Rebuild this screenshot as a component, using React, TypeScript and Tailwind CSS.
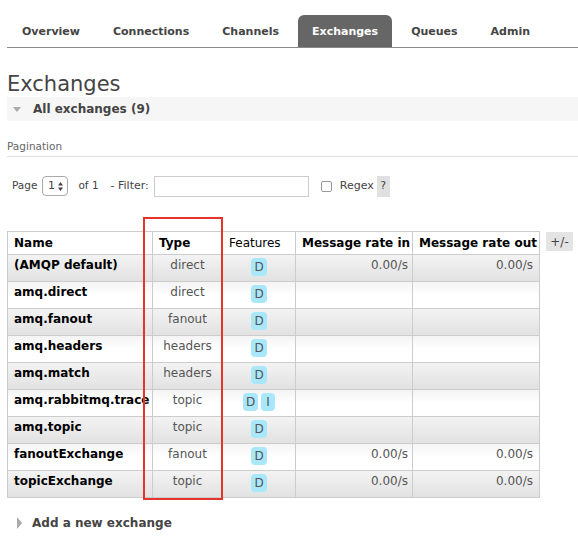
import React from "react";

const TABS = ["Overview", "Connections", "Channels", "Exchanges", "Queues", "Admin"];

const ROWS = [
  { name: "(AMQP default)", type: "direct", features: ["D"], rin: "0.00/s", rout: "0.00/s" },
  { name: "amq.direct", type: "direct", features: ["D"], rin: "", rout: "" },
  { name: "amq.fanout", type: "fanout", features: ["D"], rin: "", rout: "" },
  { name: "amq.headers", type: "headers", features: ["D"], rin: "", rout: "" },
  { name: "amq.match", type: "headers", features: ["D"], rin: "", rout: "" },
  { name: "amq.rabbitmq.trace", type: "topic", features: ["D", "I"], rin: "", rout: "" },
  { name: "amq.topic", type: "topic", features: ["D"], rin: "", rout: "" },
  { name: "fanoutExchange", type: "fanout", features: ["D"], rin: "0.00/s", rout: "0.00/s" },
  { name: "topicExchange", type: "topic", features: ["D"], rin: "0.00/s", rout: "0.00/s" },
];

function Badge({ label }: { label: string }) {
  return (
    <span className="inline-flex h-[18px] min-w-[14px] items-center justify-center rounded-[4px] bg-[#a9e7fb] px-[3px] text-[12px] leading-none text-[#555]">
      {label}
    </span>
  );
}

export default function App() {
  return (
    <div className="relative min-h-[545px] w-[578px] overflow-hidden bg-white pt-[15px] pl-[7px] font-['DejaVu_Sans',Verdana,sans-serif] text-[#444]">
      {/* Tabs */}
      <nav className="flex h-[33px] border-b border-[#888] pl-px">
        {TABS.map((t) => (
          <div
            key={t}
            className={
              t === "Exchanges"
                ? "mr-[5px] flex h-[32px] shrink-0 items-center rounded-t-[6px] bg-[#666] px-[14px] pt-[2px] text-[11px] font-bold text-white"
                : "mr-[5px] flex h-[32px] shrink-0 items-center px-[14px] pt-[2px] text-[11px] font-bold text-[#444]"
            }
          >
            {t}
          </div>
        ))}
      </nav>

      <h1 className="mt-[24px] h-[24px] text-[21px] leading-[24px] font-normal text-[#444]">Exchanges</h1>

      <div className="mt-px flex h-[24px] items-center bg-[#f6f6f6] pl-[6px] text-[12px] font-bold text-[#444]">
        <span className="mr-[12px] h-0 w-0 border-x-[4px] border-t-[5px] border-x-transparent border-t-[#aaa]" />
        All exchanges (9)
      </div>

      <div className="mt-[18px] border-b border-[#ddd] pb-[3px] text-[10.5px] leading-[14px] text-[#666]">Pagination</div>

      <div className="mt-[18px] flex h-[22px] items-center pl-[5px] text-[10.5px] text-[#444]">
        <span>Page</span>
        <span className="ml-[5px] flex h-[20px] w-[26px] items-center justify-center gap-[3px] rounded-[4px] border border-[#aaa] bg-white text-[11px]">
          1
          <svg width="5" height="9" viewBox="0 0 5 9">
            <path d="M2.5 0 L5 3.5 L0 3.5 Z M2.5 9 L5 5.5 L0 5.5 Z" fill="#444" />
          </svg>
        </span>
        <span className="ml-[10px]">of 1</span>
        <span className="ml-[12px] text-[11px]">- Filter:</span>
        <span className="ml-[5px] h-[21px] w-[155px] border border-[#ccc] bg-white" />
        <span className="ml-[12px] h-[11px] w-[11px] rounded-[2px] border border-[#999] bg-white" />
        <span className="ml-[8px] text-[11px]">Regex</span>
        <span className="ml-[3px] flex h-[21px] w-[13px] items-center justify-center bg-[#e0e0e0] text-[11px]">?</span>
      </div>

      <div className="mt-[34px] flex items-start">
        <table className="w-[532px] table-fixed border-collapse text-[12px]">
          <colgroup>
            <col className="w-[145px]" />
            <col className="w-[70px]" />
            <col className="w-[73px]" />
            <col className="w-[117px]" />
            <col className="w-[127px]" />
          </colgroup>
          <thead>
            <tr className="h-[23px] bg-white">
              <th className="border border-[#ccc] pl-[6px] text-left font-bold text-black">Name</th>
              <th className="border border-[#ccc] pl-[6px] text-left font-bold text-black">Type</th>
              <th className="border border-[#ccc] pl-[6px] text-left font-normal text-black">Features</th>
              <th className="border border-[#ccc] pl-[6px] text-left font-bold text-black">Message rate in</th>
              <th className="border border-[#ccc] pl-[6px] text-left font-bold text-black">Message rate out</th>
            </tr>
          </thead>
          <tbody>
            {ROWS.map((r, i) => (
              <tr
                key={r.name}
                className={
                  i % 2 === 0
                    ? "h-[27px] bg-[linear-gradient(#f3f3f3,#e1e1e1)]"
                    : "h-[27px] bg-[linear-gradient(#f4f4f4,#ffffff_50%)]"
                }
              >
                <td className="overflow-hidden border border-[#ccc] pt-[3px] pl-[6px] align-top leading-[14px] font-bold whitespace-nowrap text-black">
                  {r.name}
                </td>
                <td className="border border-[#ccc] pt-[3px] text-center align-top leading-[14px] text-[#555]">{r.type}</td>
                <td className="border border-[#ccc] pt-[3px] text-center align-top">
                  <span className="inline-flex gap-[3px]">
                    {r.features.map((f) => (
                      <Badge key={f} label={f} />
                    ))}
                  </span>
                </td>
                <td className="border border-[#ccc] pt-[3px] pr-[4px] text-right align-top leading-[14px] text-[#555]">{r.rin}</td>
                <td className="border border-[#ccc] pt-[3px] pr-[6px] text-right align-top leading-[14px] text-[#555]">{r.rout}</td>
              </tr>
            ))}
          </tbody>
        </table>
        <div className="mt-px ml-[6px] flex h-[19px] w-[27px] items-center justify-center bg-[#e4e4e4] text-[12px] text-[#444]">
          +/-
        </div>
      </div>

      <div className="mt-[18px] flex h-[14px] items-center pl-[10px] text-[12px] font-bold text-[#444]">
        <span className="mr-[10px] h-0 w-0 border-y-[6px] border-l-[5px] border-y-transparent border-l-[#aaa]" />
        Add a new exchange
      </div>

      {/* annotation frame round the Type column */}
      <div className="pointer-events-none absolute top-[217px] left-[143px] h-[283px] w-[80px] border-2 border-[#e5342a]" />
    </div>
  );
}
